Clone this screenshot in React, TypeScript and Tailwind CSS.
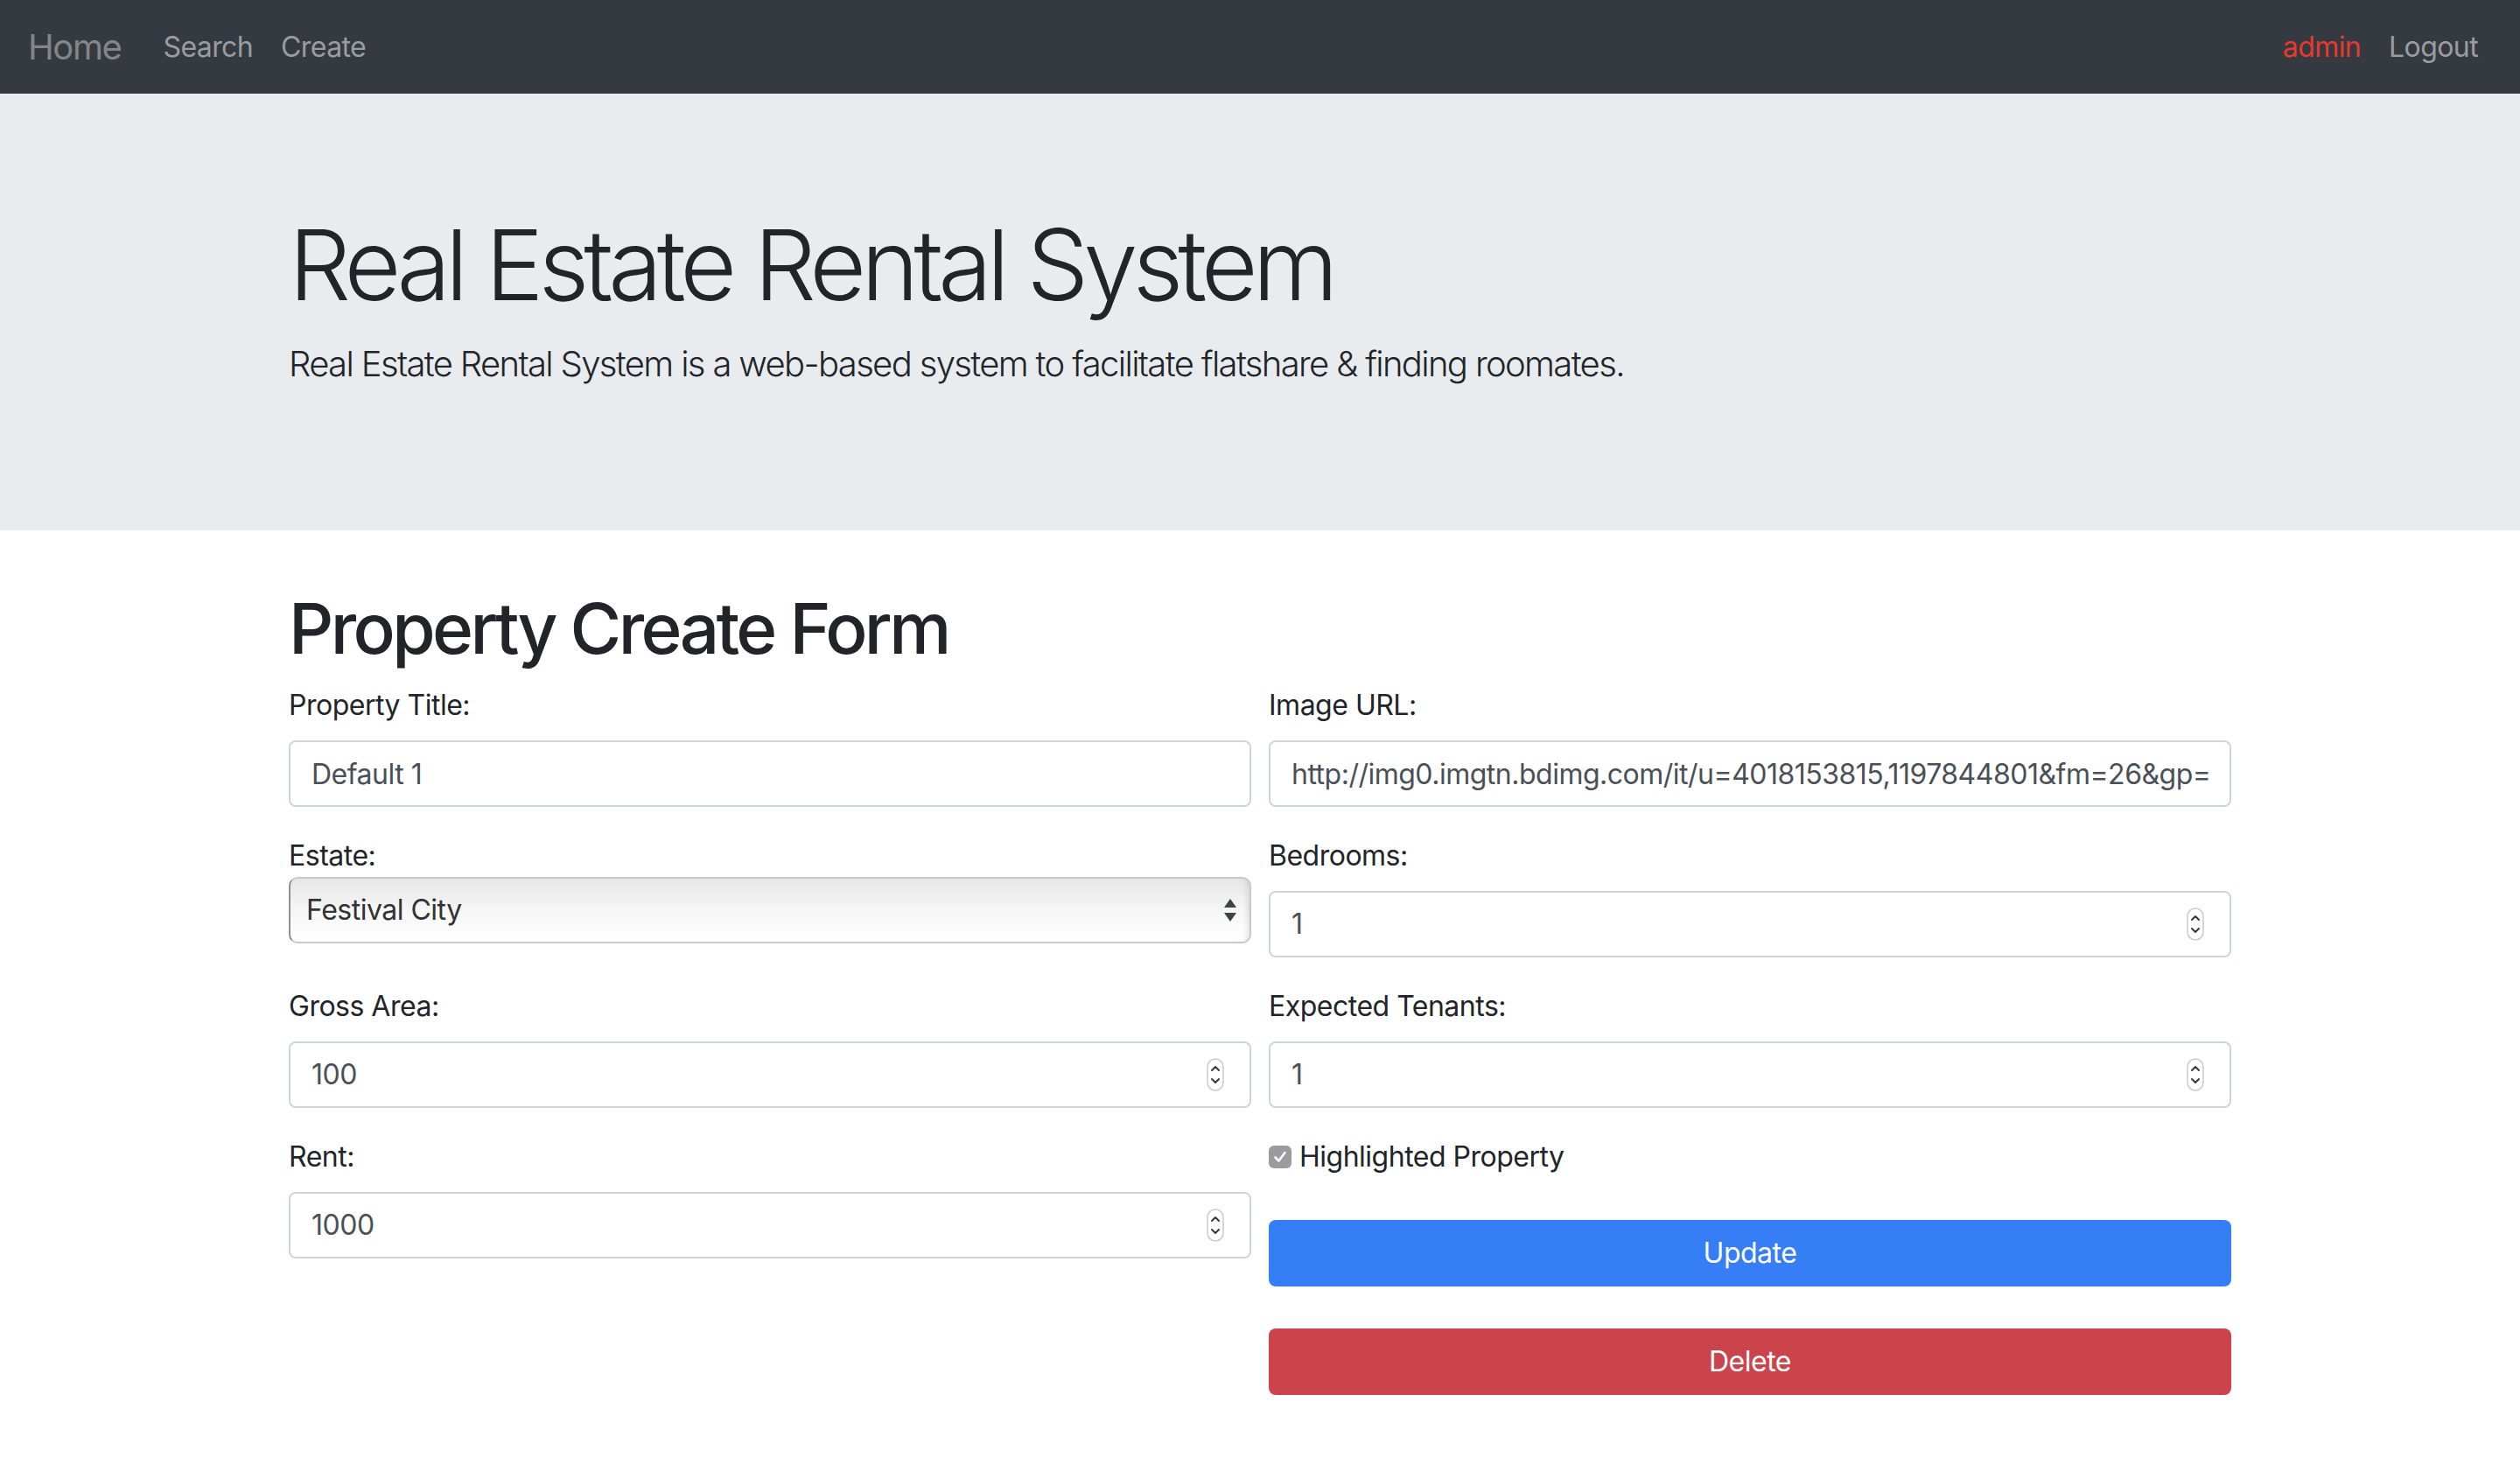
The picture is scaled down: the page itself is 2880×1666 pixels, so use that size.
import React from 'react';

const Spinner = () => (
  <svg width="20" height="38" viewBox="0 0 20 38" className="shrink-0">
    <rect x="1" y="1" width="18" height="36" rx="9" fill="#fff" stroke="#c9cbcf" strokeWidth="1.5" />
    <path d="M6 14 L10 10 L14 14" fill="none" stroke="#3a3a3c" strokeWidth="2" strokeLinecap="round" strokeLinejoin="round" />
    <path d="M6 24 L10 28 L14 24" fill="none" stroke="#3a3a3c" strokeWidth="2" strokeLinecap="round" strokeLinejoin="round" />
  </svg>
);

const Label = ({ children }: { children: React.ReactNode }) => (
  <label className="block text-[32px] leading-[48px] mb-[16px] text-[#212529]">{children}</label>
);

const TextField = ({ label, value }: { label: string; value: string }) => (
  <div className="mb-[32px]">
    <Label>{label}</Label>
    <input
      readOnly
      value={value}
      className="block w-full h-[76px] border-2 border-[#ced4da] rounded-[8px] px-[24px] text-[32px] tracking-[-0.5px] text-[#495057] bg-white outline-none"
    />
  </div>
);

const NumberField = ({ label, value }: { label: string; value: string }) => (
  <div className="mb-[32px]">
    <Label>{label}</Label>
    <div className="flex items-center w-full h-[76px] border-2 border-[#ced4da] rounded-[8px] pl-[24px] pr-[29px] bg-white">
      <input readOnly value={value} className="flex-1 min-w-0 text-[32px] tracking-[-0.5px] text-[#495057] bg-transparent outline-none" />
      <Spinner />
    </div>
  </div>
);

export default function App() {
  return (
    <div className="min-h-screen bg-white font-['Inter','Noto_Sans',sans-serif] tracking-[-0.5px] text-[#212529]">
      <nav className="h-[107px] bg-[#343a40] flex items-center justify-between px-[32px]">
        <div className="flex items-center">
          <span className="text-[40px] leading-[60px] tracking-[-1.4px] text-[#838689] mr-[32px]">Home</span>
          <a className="px-[16px] text-[32px] leading-[48px] tracking-[-0.6px] text-[#9a9da0]">Search</a>
          <a className="px-[16px] text-[32px] leading-[48px] tracking-[-0.6px] text-[#9a9da0]">Create</a>
        </div>
        <div className="flex items-center">
          <a className="px-[16px] text-[32px] leading-[48px] tracking-[-0.6px] text-[#e8392c]">admin</a>
          <a className="px-[16px] text-[32px] leading-[48px] tracking-[-0.6px] text-[#9a9da0]">Logout</a>
        </div>
      </nav>

      <header className="bg-[#e9ecef] pt-[128px] pb-[128px]">
        <div className="w-[2220px] mx-auto">
          <h1 className="text-[112px] leading-[135px] font-light mb-[16px] tracking-[-6px]">Real Estate Rental System</h1>
          <p className="text-[40px] leading-[60px] font-light mb-[32px] tracking-[-1.65px]">
            Real Estate Rental System is a web-based system to facilitate flatshare &amp; finding roomates.
          </p>
        </div>
      </header>

      <main className="w-[2220px] mx-auto mt-[64px] pb-[64px]">
        <h1 className="text-[80px] leading-[96px] font-medium mb-[16px] tracking-[-3.6px]">Property Create Form</h1>
        <div className="grid grid-cols-2 gap-x-[20px]">
          <div className="flex flex-col">
            <TextField label="Property Title:" value="Default 1" />
            <div className="mb-[48px]">
              <label className="block text-[32px] leading-[48px] text-[#212529]">Estate:</label>
              <div className="flex items-center justify-between h-[76px] rounded-[10px] border-2 border-[#c9c9cb] border-l-[#8f9194] bg-gradient-to-b from-[#e6e6e6] via-[#f6f6f6] to-[#ffffff] pl-[18px] pr-[14px] shadow-[inset_-6px_0_6px_-4px_rgba(0,0,0,0.12)]">
                <span className="text-[32px] text-[#333333]">Festival City</span>
                <svg width="16" height="28" viewBox="0 0 16 28">
                  <path d="M8 1 L15 11 L1 11 Z" fill="#3f4245" />
                  <path d="M8 27 L15 17 L1 17 Z" fill="#3f4245" />
                </svg>
              </div>
            </div>
            <NumberField label="Gross Area:" value="100" />
            <NumberField label="Rent:" value="1000" />
          </div>

          <div className="flex flex-col">
            <TextField
              label="Image URL:"
              value="http://img0.imgtn.bdimg.com/it/u=4018153815,1197844801&fm=26&gp=0.jpg"
            />
            <NumberField label="Bedrooms:" value="1" />
            <NumberField label="Expected Tenants:" value="1" />
            <div className="flex items-center h-[48px] mb-[48px]">
              <span className="w-[26px] h-[26px] rounded-[6px] bg-[#9b9a9f] flex items-center justify-center mr-[9px]">
                <svg width="18" height="18" viewBox="0 0 18 18">
                  <path d="M3.5 9.5 L7.5 13.5 L14.5 4" fill="none" stroke="#fff" strokeWidth="2.6" strokeLinecap="round" strokeLinejoin="round" />
                </svg>
              </span>
              <span className="text-[32px] leading-[48px] text-[#212529]">Highlighted Property</span>
            </div>
            <button className="h-[76px] w-full rounded-[8px] bg-[#367ef5] text-white text-[32px] mb-[48px]">Update</button>
            <button className="h-[76px] w-full rounded-[8px] bg-[#cb444b] text-white text-[32px]">Delete</button>
          </div>
        </div>
      </main>
    </div>
  );
}
